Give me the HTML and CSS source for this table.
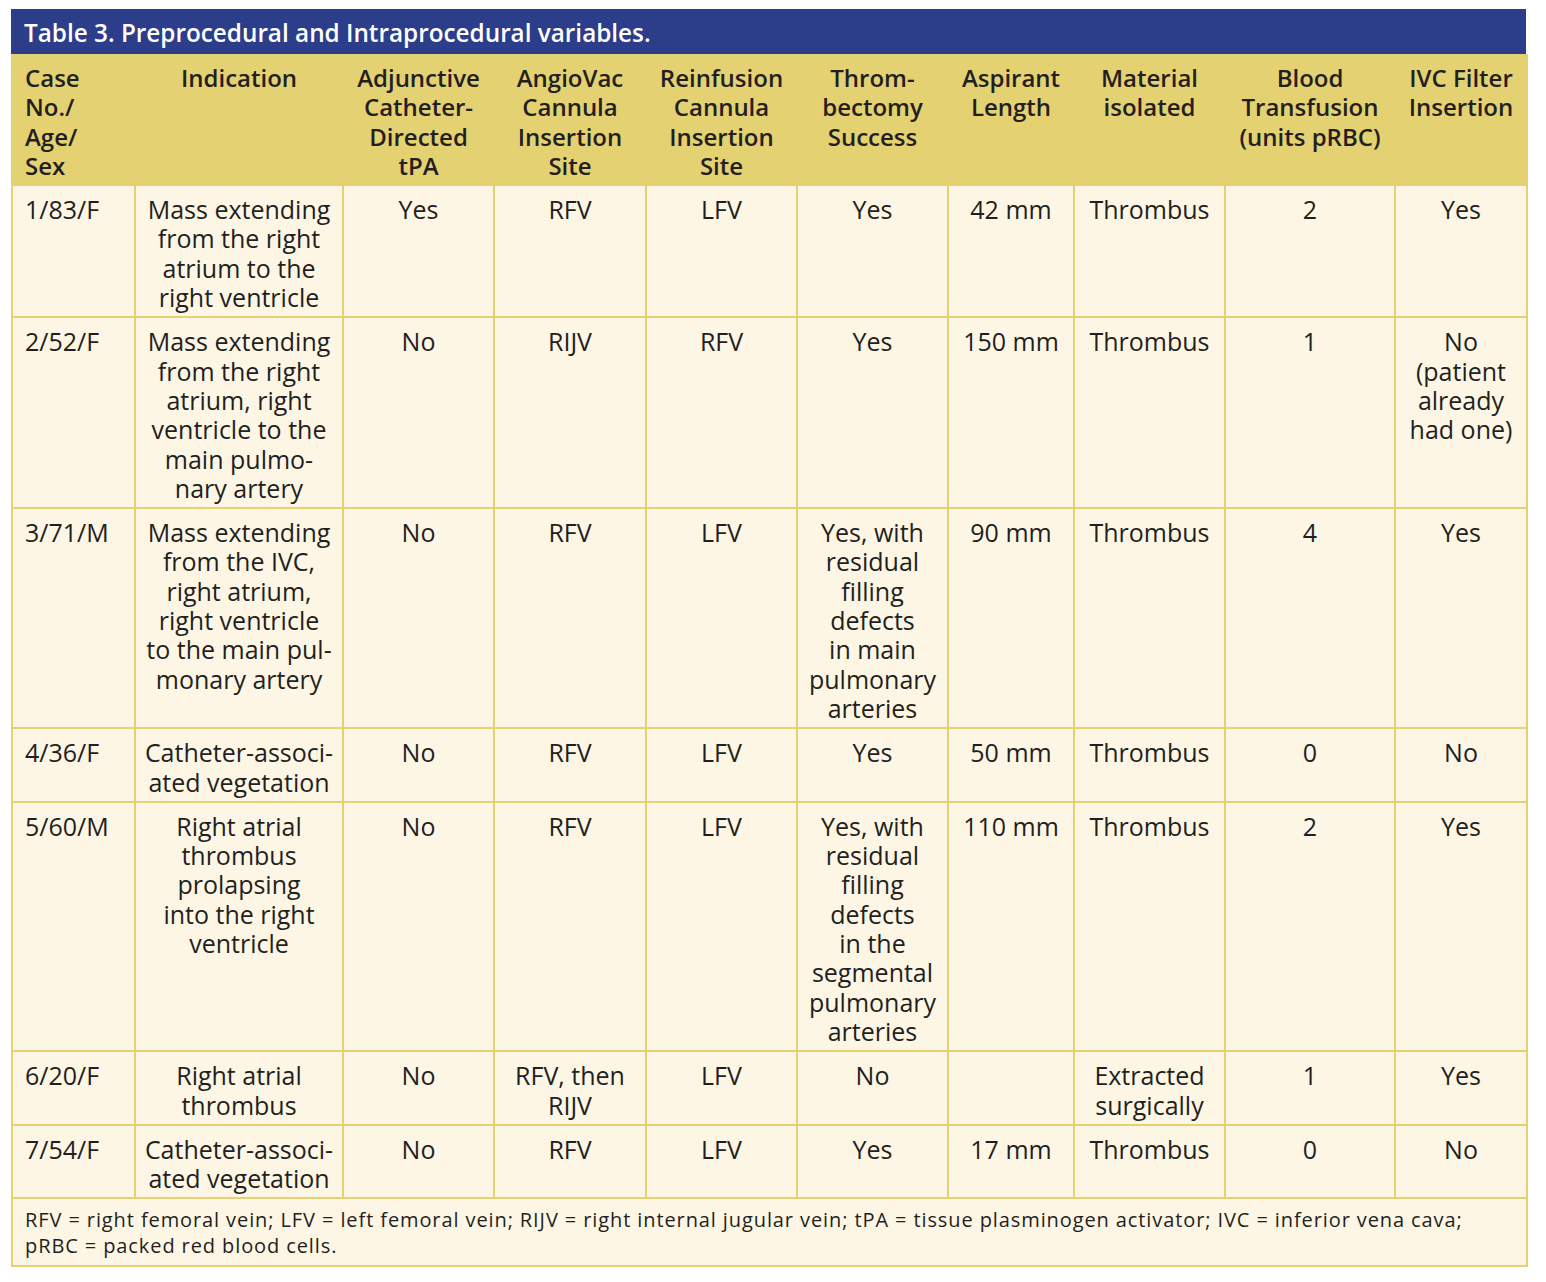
FILE: index.html
```html
<!DOCTYPE html>
<html>
<head>
<meta charset="utf-8">
<link rel="stylesheet" href="styles.css">
</head>
<body>
<div class="wrap">
  <div class="title">Table 3. Preprocedural and Intraprocedural variables.</div>
  <table class="data">
    <colgroup>
      <col class="c1"><col class="c2"><col class="c3"><col class="c4"><col class="c5">
      <col class="c6"><col class="c7"><col class="c8"><col class="c9"><col class="c10">
    </colgroup>
    <thead>
      <tr>
        <th class="left">Case<br>No./<br>Age/<br>Sex</th>
        <th>Indication</th>
        <th>Adjunctive<br>Catheter-<br>Directed<br>tPA</th>
        <th>AngioVac<br>Cannula<br>Insertion<br>Site</th>
        <th>Reinfusion<br>Cannula<br>Insertion<br>Site</th>
        <th>Throm-<br>bectomy<br>Success</th>
        <th>Aspirant<br>Length</th>
        <th>Material<br>isolated</th>
        <th>Blood<br>Transfusion<br>(units pRBC)</th>
        <th>IVC Filter<br>Insertion</th>
      </tr>
    </thead>
    <tbody>
      <tr>
        <td class="left">1/83/F</td>
        <td>Mass extending<br>from the right<br>atrium to the<br>right ventricle</td>
        <td>Yes</td><td>RFV</td><td>LFV</td><td>Yes</td><td>42 mm</td><td>Thrombus</td><td>2</td><td>Yes</td>
      </tr>
      <tr>
        <td class="left">2/52/F</td>
        <td>Mass extending<br>from the right<br>atrium, right<br>ventricle to the<br>main pulmo-<br>nary artery</td>
        <td>No</td><td>RIJV</td><td>RFV</td><td>Yes</td><td>150 mm</td><td>Thrombus</td><td>1</td><td>No<br>(patient<br>already<br>had one)</td>
      </tr>
      <tr>
        <td class="left">3/71/M</td>
        <td>Mass extending<br>from the IVC,<br>right atrium,<br>right ventricle<br>to the main pul-<br>monary artery</td>
        <td>No</td><td>RFV</td><td>LFV</td><td>Yes, with<br>residual<br>filling<br>defects<br>in main<br>pulmonary<br>arteries</td><td>90 mm</td><td>Thrombus</td><td>4</td><td>Yes</td>
      </tr>
      <tr>
        <td class="left">4/36/F</td>
        <td>Catheter-associ-<br>ated vegetation</td>
        <td>No</td><td>RFV</td><td>LFV</td><td>Yes</td><td>50 mm</td><td>Thrombus</td><td>0</td><td>No</td>
      </tr>
      <tr>
        <td class="left">5/60/M</td>
        <td>Right atrial<br>thrombus<br>prolapsing<br>into the right<br>ventricle</td>
        <td>No</td><td>RFV</td><td>LFV</td><td>Yes, with<br>residual<br>filling<br>defects<br>in the<br>segmental<br>pulmonary<br>arteries</td><td>110 mm</td><td>Thrombus</td><td>2</td><td>Yes</td>
      </tr>
      <tr>
        <td class="left">6/20/F</td>
        <td>Right atrial<br>thrombus</td>
        <td>No</td><td>RFV, then<br>RIJV</td><td>LFV</td><td>No</td><td></td><td>Extracted<br>surgically</td><td>1</td><td>Yes</td>
      </tr>
      <tr>
        <td class="left">7/54/F</td>
        <td>Catheter-associ-<br>ated vegetation</td>
        <td>No</td><td>RFV</td><td>LFV</td><td>Yes</td><td>17 mm</td><td>Thrombus</td><td>0</td><td>No</td>
      </tr>
    </tbody>
    <tfoot>
      <tr>
        <td class="foot" colspan="10">RFV = right femoral vein; LFV = left femoral vein; RIJV = right internal jugular vein; tPA = tissue plasminogen activator; IVC = inferior vena cava;<br>pRBC = packed red blood cells.</td>
      </tr>
    </tfoot>
  </table>
</div>
</body>
</html>
```
FILE: styles.css
```css
html, body {
  margin: 0;
  padding: 0;
  background: #ffffff;
}
body {
  font-family: "Open Sans", "Lato", sans-serif;
  color: #231f20;
}
.wrap {
  margin: 9px 0 0 11px;
  width: 1515px;
}
.title {
  background: #2c3e8a;
  color: #ffffff;
  font-size: 24.3px;
  font-weight: 600;
  height: 45px;
  line-height: 48px;
  padding-left: 13px;
  box-sizing: border-box;
}
.data {
  border-collapse: collapse;
  table-layout: fixed;
  width: 1515px;
  font-size: 25px;
  line-height: 29.3px;
}
.c1 { width: 123px; }
.c2 { width: 208px; }
.c3 { width: 151px; }
.c4 { width: 152px; }
.c5 { width: 151px; }
.c6 { width: 151px; }
.c7 { width: 126px; }
.c8 { width: 151px; }
.c9 { width: 170px; }
.c10 { width: 132px; }
.data th,
.data td {
  border: 2px solid #e4d171;
  text-align: center;
  vertical-align: top;
  padding: 9px 0 4px;
  white-space: nowrap;
}
.data thead th {
  background: #e4d171;
  font-size: 24px;
  font-weight: 600;
  border-top: 0;
}
.data tbody td,
.data tfoot td {
  background: #fdf6e5;
  font-weight: 400;
}
.data .left {
  text-align: left;
  padding-left: 12px;
}
.data td.foot {
  text-align: left;
  padding: 8px 12px 6px;
  font-size: 20px;
  line-height: 26px;
  letter-spacing: 0.9px;
}
```
